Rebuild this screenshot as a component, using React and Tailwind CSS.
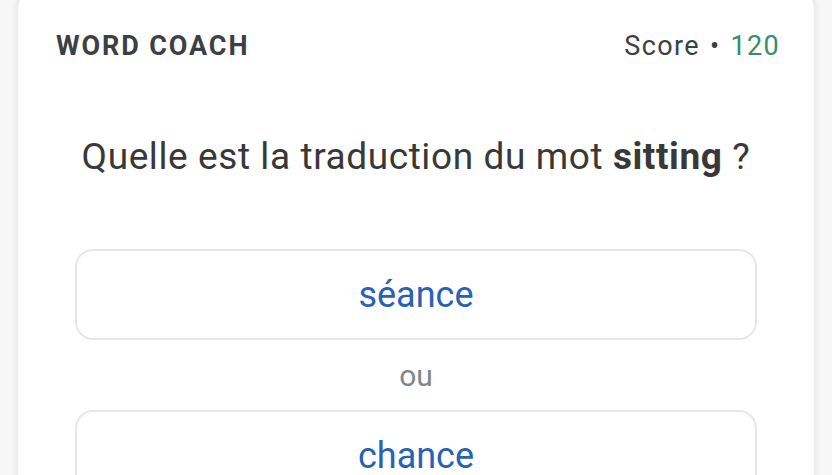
import React from 'react'

const Choice = ({ label }) => (
  <button className="flex h-[91px] w-full items-center justify-center rounded-[18px] border-2 border-[#e3e8ef] bg-white text-[36px] leading-[44px] text-[#2862b6]">
    {label}
  </button>
)

const App = () => {
  return (
    <div className="min-h-screen overflow-hidden bg-[#f7f7f7] px-[18px] font-['Roboto',sans-serif]">
      <div className="-mt-[8px] h-[500px] rounded-[16px] bg-white px-[38px] pt-[38px] shadow-[0_0_8px_rgba(0,0,0,0.12)]">
        <div className="flex items-center justify-between">
          <h2 className="text-[27px] font-bold leading-[32px] tracking-[0.07em] text-[#3c4043]">WORD COACH</h2>
          <div className="mr-[-4px] text-[27px] leading-[32px] tracking-[0.05em] text-[#3c4043]">
            Score <span className="mx-[2px]">•</span> <span className="text-[#329063]">120</span>
          </div>
        </div>

        <p className="mt-[73px] text-center text-[37px] leading-[44px] tracking-[0.016em] text-[#383838]">
          Quelle est la traduction du mot <span className="font-bold">sitting</span> ?
        </p>

        <div className="mx-[19px] mt-[70px] flex flex-col items-center">
          <Choice label="séance" />
          <span className="pb-[16px] pt-[18px] text-[30px] leading-[36px] text-[#80868b]">ou</span>
          <Choice label="chance" />
        </div>
      </div>
    </div>
  )
}

export default App
